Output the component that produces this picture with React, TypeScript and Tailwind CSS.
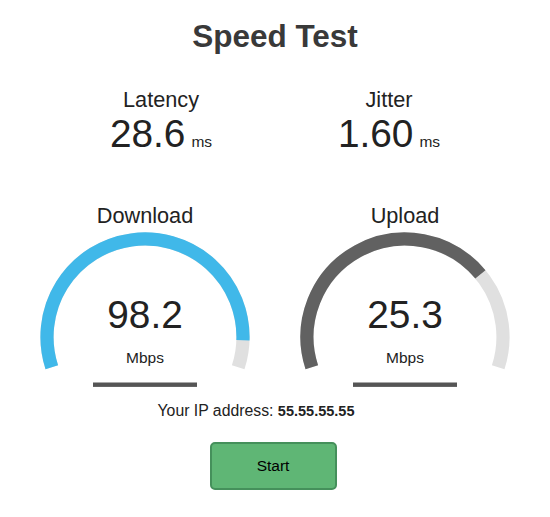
import React from 'react'

const CX = 130
const CY = 136
const R = 98
const LW = 13.2

// same curve as the original meter: fast at first, flattening out
function mbpsToAmount(s: number) {
  return 1 - 1 / Math.pow(1.3, Math.sqrt(s))
}

function arcPath(from: number, to: number) {
  const a0 = (from * Math.PI) / 180
  const a1 = (to * Math.PI) / 180
  const x0 = CX + R * Math.cos(a0)
  const y0 = CY + R * Math.sin(a0)
  const x1 = CX + R * Math.cos(a1)
  const y1 = CY + R * Math.sin(a1)
  const large = to - from > 180 ? 1 : 0
  return `M ${x0.toFixed(2)} ${y0.toFixed(2)} A ${R} ${R} 0 ${large} 1 ${x1.toFixed(2)} ${y1.toFixed(2)}`
}

function Gauge({ name, value, color }: { name: string; value: string; color: string }) {
  const amount = mbpsToAmount(parseFloat(value))
  const start = -198
  const end = start + amount * 216

  return (
    <div className="relative w-[260px] h-[200px]">
      <svg width="260" height="200" viewBox="0 0 260 200" className="block">
        <path d={arcPath(start, 18)} fill="none" stroke="#e0e0e0" strokeWidth={LW} />
        <path d={arcPath(start, end)} fill="none" stroke={color} strokeWidth={LW} />
        <rect x="78" y="181.5" width="104" height="4.4" fill="#555555" />
      </svg>
      <div className="absolute left-0 top-[2px] w-full text-center text-[21.7px] leading-[26px]">{name}</div>
      <div className="absolute left-0 top-[93px] w-full text-center text-[38.8px] leading-[42px]">{value}</div>
      <div className="absolute left-0 top-[148px] w-full text-center text-[15.5px] leading-[18px]">Mbps</div>
    </div>
  )
}

function Stat({ name, value }: { name: string; value: string }) {
  return (
    <div className="w-[228px] flex flex-col items-center">
      <div className="text-[21.7px] leading-[27px]">{name}</div>
      <div className="flex items-baseline">
        <span className="text-[38.8px] leading-[42px]">{value}</span>
        <span className="ml-[6px] text-[15.5px] leading-[18px]">ms</span>
      </div>
    </div>
  )
}

export default function App() {
  return (
    <div
      className="w-[550px] h-[517px] bg-white text-[#222222] flex flex-col items-center"
      style={{ fontFamily: '"Liberation Sans", Arial, sans-serif' }}
    >
      <h1 className="mt-[18px] text-[31.5px] leading-[36px] font-bold text-[#393939]">Speed Test</h1>

      <div className="mt-[32px] flex">
        <Stat name="Latency" value="28.6" />
        <Stat name="Jitter" value="1.60" />
      </div>

      <div className="mt-[46px] flex">
        <Gauge name="Download" value="98.2" color="#40b8e9" />
        <Gauge name="Upload" value="25.3" color="#616161" />
      </div>

      <div className="mt-[1px] mr-[38px] text-[15.8px] leading-[18px]">
        Your IP address: <span className="font-bold text-[14.5px]">55.55.55.55</span>
      </div>

      <button
        type="button"
        className="mt-[22px] mr-[4px] w-[127px] h-[48px] rounded-[5px] bg-[#5fb675] border-2 border-[#45905b] text-[15.5px] text-black"
      >
        Start
      </button>
    </div>
  )
}
